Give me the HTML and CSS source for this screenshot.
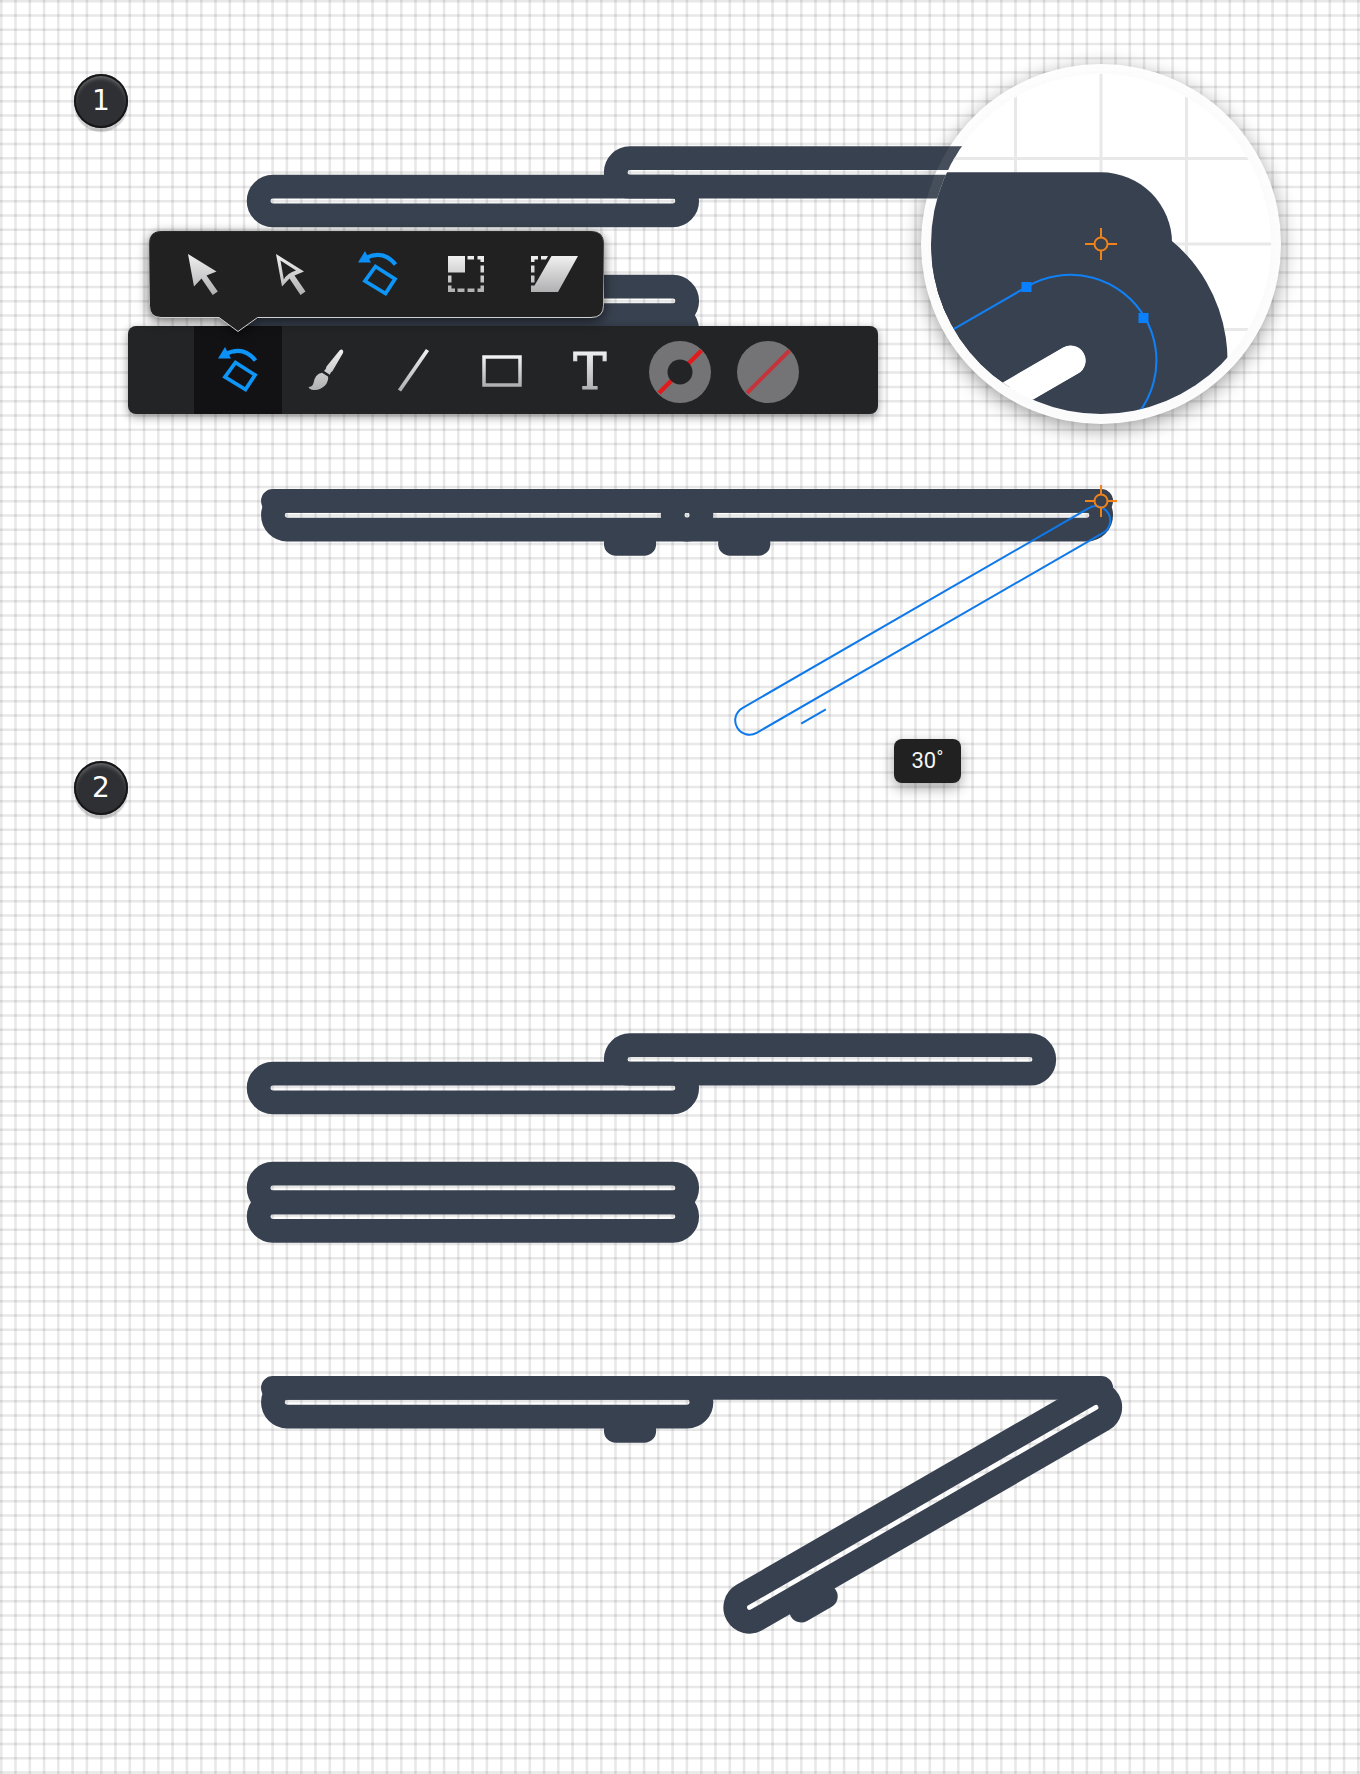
FILE: index.html
```html
<!DOCTYPE html>
<html lang="en">
<head>
<meta charset="utf-8">
<meta name="viewport" content="width=device-width, initial-scale=1">
<title>Rotate the stand leg</title>
<link rel="stylesheet" href="styles.css">
</head>
<body>
<main class="board">
  <svg class="board-grid" aria-hidden="true">
    <defs>
      <!-- seven cells per 100px tile -->
      <pattern id="grid" width="100" height="100" patternUnits="userSpaceOnUse">
        <path class="grid-line" d="M1.3 0V100M15.5 0V100M29.8 0V100M44.1 0V100M58.3 0V100M72.6 0V100M86.9 0V100"/>
        <path class="grid-line" d="M0 1.3H100M0 15.5H100M0 29.8H100M0 44.1H100M0 58.3H100M0 72.6H100M0 86.9H100"/>
      </pattern>
      <linearGradient id="metal" x1="0" y1="0" x2="0" y2="1">
        <stop offset="0" stop-color="#f0f0f0"/><stop offset="1" stop-color="#b0b0b2"/>
      </linearGradient>
      <linearGradient id="metal-tool" gradientUnits="userSpaceOnUse" x1="0" y1="24" x2="0" y2="64">
        <stop offset="0" stop-color="#f0f0f0"/><stop offset="1" stop-color="#b0b0b2"/>
      </linearGradient>
      <linearGradient id="rim" x1="0" y1="0" x2="0" y2="1">
        <stop offset="0" stop-color="#2a2a2b"/><stop offset=".4" stop-color="#6a6a6c"/><stop offset=".85" stop-color="#d0d0d2"/>
      </linearGradient>
      <symbol id="icon-rotate" viewBox="0 0 88 88">
        <g fill="none" stroke="#0d96f8">
          <path stroke-width="4.200" d="M31 27.500Q49 18 61.500 33.500"/>
          <path stroke-width="3.800" d="M41.500 35.500L61 48L51.500 62.500L31 50Z"/>
        </g>
        <path fill="#0d8ff8" d="M24 31.500L31 20L37 31.500Z"/>
      </symbol>
      <rect id="pill" x="258.600" y="186.700" width="428.600" height="28.600" rx="14.300"/>
      <g id="leg">
        <rect x="672.600" y="501" width="428.600" height="28.600" rx="14.300"/>
        <path d="M730 543.900H758.500"/>
      </g>
      <g id="slides">
        <use href="#pill" x="357.100" y="-28.600"/>
        <use href="#pill"/>
        <use href="#pill" y="100"/>
        <use href="#pill" y="128.600"/>
      </g>
      <g id="base">
        <use href="#pill" x="14.300" y="314.300"/>
        <path d="M272.900 500.900H1101.200M615.800 543.900H644.300"/>
      </g>
      <g id="pivot">
        <circle r="6.500"/>
        <path d="M0 -16V-7M0 16V7M-16 0H-7M16 0H7"/>
      </g>
    </defs>
    <rect width="100%" height="100%" fill="url(#grid)"/>
  </svg>

  <section class="step">
    <h2 class="step-number">1</h2>
    <svg class="art art-before" viewBox="128 74 1158 613" role="img" aria-label="Leg outline being rotated around its right end">
      <defs>
        <clipPath id="lens-clip"><circle cx="1101" cy="244" r="170"/></clipPath>
      </defs>
      <circle class="lens-glass" cx="1101" cy="244" r="180"/>
      <g class="shape">
        <use href="#slides"/>
        <use href="#base"/>
        <use href="#leg"/>
      </g>
      <use class="guide" href="#leg" transform="rotate(-30 1101 501)"/>
      <use class="pivot" href="#pivot" x="1101" y="501"/>
      <circle class="lens-rim" cx="1101" cy="244" r="175"/>
      <g clip-path="url(#lens-clip)">
        <rect x="921" y="64" width="360" height="360" fill="#fff"/>
        <path class="lens-grid" d="M1015.500 74V424M1101 74V424M1186.500 84V424M921 158.500H1250M921 244H1271M921 329.500H1248"/>
        <g transform="translate(1101 244) scale(6) translate(-1101 -501)">
          <g class="shape">
            <path d="M1040 500.900H1101"/>
            <path d="M1040 520H1075"/>
            <use href="#leg" transform="rotate(-30 1101 501)"/>
          </g>
          <path class="slot" d="M1000 515.300H1086.900" transform="rotate(-30 1101 501)"/>
          <use class="guide guide-zoomed" href="#leg" transform="rotate(-30 1101 501)"/>
        </g>
        <path fill="#0a80ff" d="M1021.500 282h10v10h-10zM1138.500 313h10v10h-10z"/>
      </g>
      <use class="pivot" href="#pivot" x="1101" y="244"/>
    </svg>

    <div class="toolbar" role="toolbar" aria-label="Tools">
      <button class="tool tool-active" type="button" aria-label="Rotate">
        <svg class="tool-icon" viewBox="0 -1 88 88"><use href="#icon-rotate" width="88" height="88"/></svg>
      </button>
      <button class="tool" type="button" aria-label="Brush">
        <svg class="tool-icon" viewBox="282 326 88 88">
          <path fill="url(#metal)" d="M339.500 350.500Q341.500 348.700 343 350.500Q343.500 351.500 343 353L332.500 371Q330.500 372 329.800 374.800L324 371Q326.300 369 326.500 366.500ZM322 372.800L328 376.500Q329 380 325.500 385Q320 390.700 313.500 390Q309.500 389.500 308.500 387Q312.500 387 313.500 383Q315 374 322 372.800Z"/>
        </svg>
      </button>
      <button class="tool" type="button" aria-label="Line">
        <svg class="tool-icon" viewBox="0 0 88 88"><path fill="none" stroke="url(#metal)" stroke-width="3.800" d="M29.500 64.500L57.500 24"/></svg>
      </button>
      <button class="tool" type="button" aria-label="Rectangle">
        <svg class="tool-icon" viewBox="0 0 88 88"><rect x="26" y="31" width="36" height="28" fill="none" stroke="url(#metal)" stroke-width="3.500"/></svg>
      </button>
      <button class="tool" type="button" aria-label="Type">
        <svg class="tool-icon" viewBox="0 0 88 88"><text class="type-icon" x="44" y="63" fill="url(#metal-tool)" stroke="url(#metal-tool)">T</text></svg>
      </button>
      <button class="tool" type="button" aria-label="No stroke">
        <svg class="tool-icon" viewBox="0 0 88 88">
          <circle cx="46" cy="46" r="31" fill="#747476"/>
          <path stroke="#e11a1c" stroke-width="4.500" d="M25 67L67.500 24.500"/>
          <circle cx="46" cy="46" r="12.500" fill="#222425"/>
        </svg>
      </button>
      <button class="tool" type="button" aria-label="No fill">
        <svg class="tool-icon" viewBox="0 0 88 88">
          <circle cx="46" cy="46" r="31" fill="#747476"/>
          <path stroke="#c4343a" stroke-width="4" d="M25 67L67.500 24.500"/>
        </svg>
      </button>
    </div>

    <div class="flyout" role="toolbar" aria-label="Selection and transform tools">
      <svg class="flyout-shape" viewBox="0 0 456 102" aria-hidden="true">
        <path d="M12 .5H442Q454.500 .5 454.500 12.500V74.500Q454.500 86.500 442 86.500H108.500L89 100.500L70 86.500H12Q.5 86.500 .5 74.500V12.500Q.5 .5 12 .5Z" fill="#212122" stroke="url(#rim)"/>
      </svg>
      <button class="tool" type="button" aria-label="Selection">
        <svg class="tool-icon" viewBox="158 231 88 88"><path fill="url(#metal)" d="M188 254L216.500 271.500L206.500 275.500L217.800 291.500L212.700 295L201.500 278.500L194 286.500Z"/></svg>
      </button>
      <button class="tool" type="button" aria-label="Direct selection">
        <svg class="tool-icon" viewBox="246 231 88 88">
          <path fill="url(#metal)" fill-rule="evenodd" d="M276 254L304 271.500L294.500 275.500L305.500 291.500L300.500 295L289.500 278.500L282 286.500ZM280.500 260.500L283.800 279.500Q287.500 273 296 270.500Z"/>
        </svg>
      </button>
      <button class="tool" type="button" aria-label="Rotate">
        <svg class="tool-icon" viewBox="0 0 88 88"><use href="#icon-rotate" width="88" height="88"/></svg>
      </button>
      <button class="tool" type="button" aria-label="Scale">
        <svg class="tool-icon" viewBox="422 231 88 88">
          <path fill="url(#metal)" d="M448 256h17v16.500h-17zM467.500 256h6.500v3.500h-6.500zM477.500 256h6.500v6h-3.500v-2.500h-3zM480.500 265.500h3.500v7h-3.500zM480.500 275.500h3.500v7h-3.500zM480.500 285.500h3.500v6.500h-6.500v-3.500h3zM467.500 288.500h7v3.500h-7zM457.500 288.500h7v3.500h-7zM448 285.500h3.500v3h3.500v3.500h-7zM448 275.500h3.500v7h-3.500z"/>
        </svg>
      </button>
      <button class="tool" type="button" aria-label="Shear">
        <svg class="tool-icon" viewBox="510 231 88 88">
          <path fill="url(#metal)" d="M551.500 256H578L558 292H531L531 285.500H534.500ZM531 256h7v3.500h-3.500v2.500h-3.500zM541 256h7l-2 3.500h-5zM531 265.500h3.500v7h-3.500zM531 275.500h3.500v7h-3.500z"/>
        </svg>
      </button>
    </div>

    <output class="angle">30˚</output>
  </section>

  <section class="step">
    <h2 class="step-number">2</h2>
    <svg class="art art-after" viewBox="128 761 1158 1013" role="img" aria-label="Leg rotated by thirty degrees">
      <g class="shape" transform="translate(0 887)">
        <use href="#slides"/>
        <use href="#base"/>
        <use href="#leg" transform="rotate(-30 1101 501)"/>
      </g>
    </svg>
  </section>
</main>
</body>
</html>
```
FILE: styles.css
```css
* {
  box-sizing: border-box;
}

body {
  margin: 0;
  background: #fff;
  font-family: Roboto, "Liberation Sans", sans-serif;
}

.board {
  position: relative;
  overflow: hidden;
}

.board-grid {
  position: absolute;
  inset: 0;
  width: 100%;
  height: 100%;
}

.grid-line {
  fill: none;
  stroke: #000;
  stroke-opacity: 0.09;
  stroke-width: 2.5;
}

.step {
  position: relative;
  display: flex;
  align-items: flex-start;
  padding: 74px 0 0 74px;
}

.step-number {
  flex: none;
  width: 54px;
  margin: 0;
  border-radius: 50%;
  background: #2f3033;
  box-shadow:
    0 4px 1px rgba(0, 0, 0, 0.18),
    inset 0 0 0 2px #161618,
    inset 0 4px 4px rgba(255, 255, 255, 0.3);
  color: #fff;
  font: 400 28px/54px "DejaVu Sans", sans-serif;
  text-align: center;
}

.art {
  display: block;
  flex: none;
  overflow: visible;
}

.art-before {
  width: 1158px;
  height: 613px;
}

.art-after {
  width: 1158px;
  height: 1013px;
}

.shape {
  fill: none;
  stroke: #38414f;
  stroke-width: 23.7;
  stroke-linecap: round;
}

.slot {
  stroke: #fff;
  stroke-width: 5;
  stroke-linecap: round;
}

.guide {
  fill: none;
  stroke: #1079ea;
  stroke-width: 2;
}

.guide-zoomed {
  stroke: #1080f4;
  stroke-width: 0.35;
}

.pivot {
  fill: none;
  stroke: #f0821a;
  stroke-width: 2;
}

.lens-glass {
  fill: #fff;
  fill-opacity: 0.95;
  filter: drop-shadow(0 5px 10px rgba(0, 0, 0, 0.4));
}

.lens-rim {
  fill: none;
  stroke: #fff;
  stroke-opacity: 0.07;
  stroke-width: 10;
}

.lens-grid {
  fill: none;
  stroke: #e8e8e8;
  stroke-width: 3;
}

.toolbar {
  position: absolute;
  top: 326px;
  left: 128px;
  display: flex;
  width: 750px;
  padding-left: 66px;
  border-radius: 8px;
  background: #222425;
  box-shadow: 0 3px 10px rgba(0, 0, 0, 0.4);
}

.tool {
  position: relative;
  flex: none;
  width: 88px;
  height: 88px;
  padding: 0;
  border: 0;
  background: none;
}

.tool-active {
  background: #121214;
}

.tool-icon {
  display: block;
  width: 88px;
  height: 88px;
}

.type-icon {
  font: 50px "DejaVu Serif", serif;
  stroke-width: 1;
  text-anchor: middle;
}

.flyout {
  position: absolute;
  top: 231px;
  left: 149px;
  display: flex;
  width: 456px;
  padding-left: 9px;
}

.flyout-shape {
  position: absolute;
  top: 0;
  left: 0;
  width: 456px;
  height: 102px;
  overflow: visible;
  filter: drop-shadow(0 3px 6px rgba(0, 0, 0, 0.6));
}

.angle {
  position: absolute;
  top: 739px;
  left: 894px;
  width: 67px;
  border-radius: 8px;
  background: #212122;
  box-shadow: 0 5px 14px rgba(0, 0, 0, 0.35);
  color: #f4f4f4;
  font-size: 22px;
  line-height: 44px;
  text-align: center;
  z-index: 1;
}
```
